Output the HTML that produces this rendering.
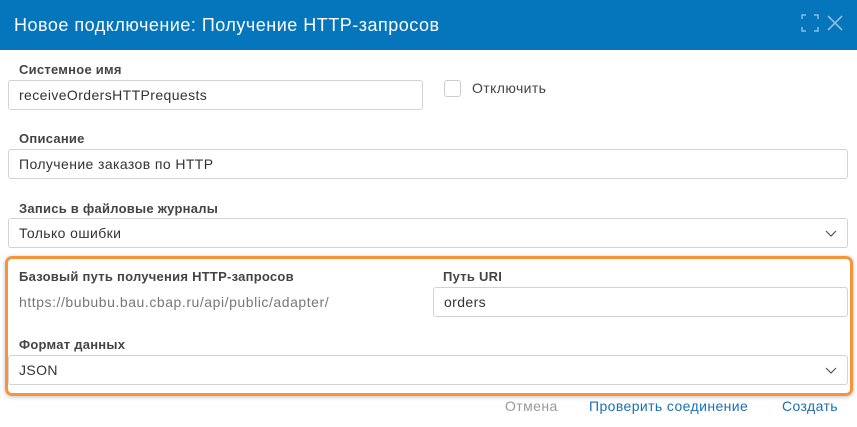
<!DOCTYPE html>
<html><head><meta charset="utf-8"><style>
*{box-sizing:border-box;margin:0;padding:0}
body{width:857px;height:427px;background:#fff;font-family:"Liberation Sans","DejaVu Sans",sans-serif;position:relative;overflow:hidden;color:#333}
.hdr{position:absolute;left:0;top:0;width:857px;height:50px;background:#0575bc;color:#fff;font-size:18px;line-height:50px;padding-left:14px;letter-spacing:.5px}
.a{position:absolute}
.lbl{position:absolute;font-size:13px;font-weight:bold;color:#444;letter-spacing:.25px}
.inp{position:absolute;border:1px solid #d3d3d3;border-radius:3px;height:30px;font-size:14px;line-height:28px;padding-left:10px;color:#333;background:#fff;letter-spacing:.4px}
.chev{position:absolute;right:10px;top:9px;width:12px;height:10px}
.btn{position:absolute;top:398px;font-size:14px;color:#1a6fb5;letter-spacing:.4px}
</style></head><body>
<div class="hdr">Новое подключение: Получение HTTP-запросов</div>
<svg class="a" style="left:800px;top:13px" width="20" height="20" viewBox="0 0 20 20" fill="none" stroke="#8cbde0" stroke-width="1.5"><path d="M2 6V2h4M14 2h4v4M18 14v4h-4M6 18H2v-4"/></svg>
<svg class="a" style="left:826px;top:14px" width="18" height="18" viewBox="0 0 18 18" fill="none" stroke="#8cbde0" stroke-width="1.6"><path d="M2 2L16 16M16 2L2 16"/></svg>

<div class="lbl" style="left:19px;top:62px">Системное имя</div>
<div class="inp" style="left:8px;top:80px;width:415px">receiveOrdersHTTPrequests</div>
<div class="a" style="left:444px;top:80px;width:17px;height:17px;border:1px solid #ccc;border-radius:3px"></div>
<div class="a" style="left:472px;top:80px;font-size:14px;color:#444;letter-spacing:.4px">Отключить</div>

<div class="lbl" style="left:19px;top:131px">Описание</div>
<div class="inp" style="left:8px;top:149px;width:840px">Получение заказов по HTTP</div>

<div class="lbl" style="left:19px;top:201px">Запись в файловые журналы</div>
<div class="inp" style="left:8px;top:218px;width:840px">Только ошибки<svg class="chev" viewBox="0 0 12 10" fill="none" stroke="#555" stroke-width="1.2"><path d="M1 3l5 5 5-5"/></svg></div>

<div class="a" style="left:5px;top:256px;width:848px;height:140px;border:3px solid #f7943a;border-radius:7px;box-shadow:0 1px 4px rgba(0,0,0,.25)"></div>
<div class="lbl" style="left:19px;top:269px">Базовый путь получения HTTP-запросов</div>
<div class="a" style="left:19px;top:294px;font-size:14px;color:#777;letter-spacing:.55px">https://bububu.bau.cbap.ru/api/public/adapter/</div>
<div class="lbl" style="left:443px;top:269px">Путь URI</div>
<div class="inp" style="left:433px;top:287px;width:415px">orders</div>
<div class="lbl" style="left:19px;top:337px">Формат данных</div>
<div class="inp" style="left:8px;top:355px;width:840px">JSON<svg class="chev" viewBox="0 0 12 10" fill="none" stroke="#555" stroke-width="1.2"><path d="M1 3l5 5 5-5"/></svg></div>

<div class="btn" style="left:505px;color:#999">Отмена</div>
<div class="btn" style="left:589px">Проверить соединение</div>
<div class="btn" style="left:782px">Создать</div>
</body></html>
